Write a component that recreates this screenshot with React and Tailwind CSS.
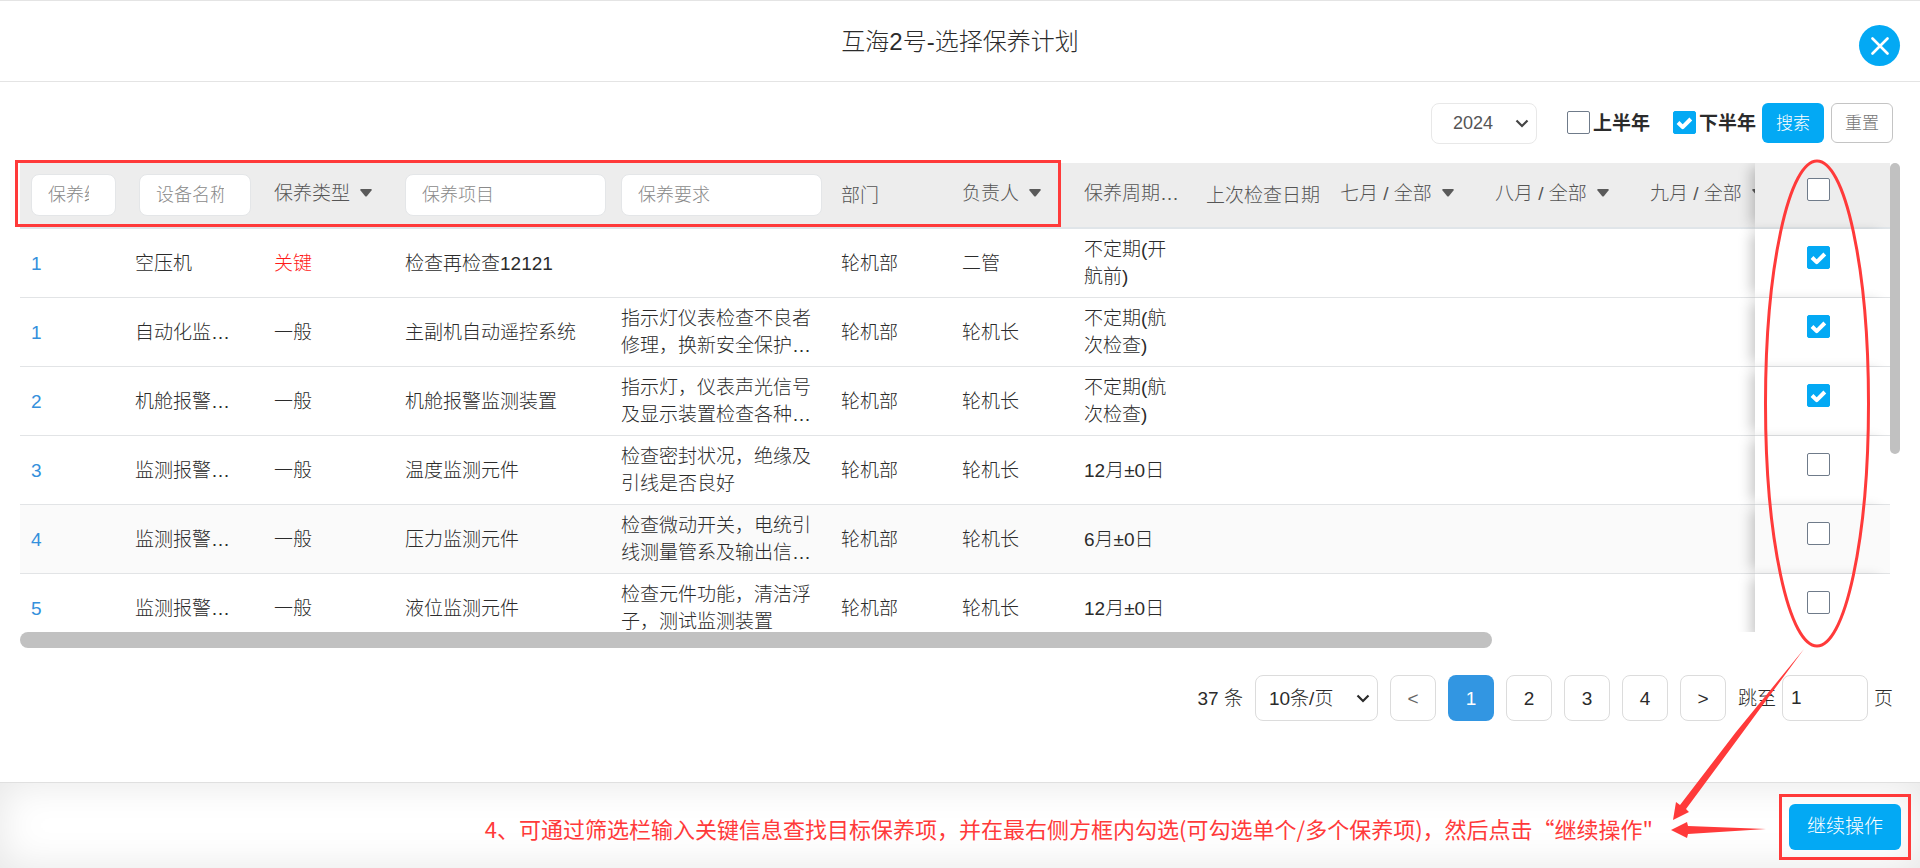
import React, { useState } from "react";
import clsx from "clsx";

const plans = [
  { id: 1, no: "1", device: "空压机", key: true, item: "检查再检查12121", detail: "", dept: "轮机部", owner: "二管", cycle: "不定期(开航前)" },
  { id: 2, no: "1", device: "自动化监…", item: "主副机自动遥控系统", detail: "指示灯仪表检查不良者修理，换新安全保护…", dept: "轮机部", owner: "轮机长", cycle: "不定期(航次检查)" },
  { id: 3, no: "2", device: "机舱报警…", item: "机舱报警监测装置", detail: "指示灯，仪表声光信号及显示装置检查各种…", dept: "轮机部", owner: "轮机长", cycle: "不定期(航次检查)" },
  { id: 4, no: "3", device: "监测报警…", item: "温度监测元件", detail: "检查密封状况，绝缘及引线是否良好", dept: "轮机部", owner: "轮机长", cycle: "12月±0日" },
  { id: 5, no: "4", device: "监测报警…", item: "压力监测元件", detail: "检查微动开关，电统引线测量管系及输出信…", dept: "轮机部", owner: "轮机长", cycle: "6月±0日" },
  { id: 6, no: "5", device: "监测报警…", item: "液位监测元件", detail: "检查元件功能，清洁浮子，测试监测装置", dept: "轮机部", owner: "轮机长", cycle: "12月±0日" },
];

const months = ["七月", "八月", "九月"];
const pages = [1, 2, 3, 4];

const Checkbox = ({ className, ...props }) => (
  <span className={clsx("relative inline-block size-[23px] shrink-0 align-middle", className)}>
    <input
      type="checkbox"
      className="peer block size-full appearance-none rounded-xs border border-[#6f7b8a] bg-white checked:border-[#03a9f4] checked:bg-[#03a9f4]"
      {...props}
    />
    <svg viewBox="0 0 23 23" className="pointer-events-none absolute inset-0 hidden peer-checked:block" fill="none" stroke="#fff" strokeWidth="4" strokeLinejoin="round">
      <path d="M5 11.500l4.700 4.600L17.800 8" />
    </svg>
  </span>
);

const Chevron = ({ className }) => (
  <svg viewBox="0 0 14 9" className={clsx("pointer-events-none absolute h-[9px] w-3.5", className)} fill="none" stroke="currentColor" strokeWidth="2.2">
    <path d="M1.500 1.500L7 7l5.500-5.500" />
  </svg>
);

const FilterButton = ({ children }) => (
  <button type="button" className="flex items-center gap-2.5 pb-1 whitespace-nowrap">
    {children}
    <svg viewBox="0 0 12 8" className="h-2 w-3" fill="#5a5a5a">
      <path d="M1 0h10q1.200 .4 .5 1.500L7 7q-1 1-2 0L.5 1.500Q-.2 .4 1 0z" />
    </svg>
  </button>
);

const FilterInput = ({ label, className }) => (
  <input
    type="text"
    aria-label={label}
    placeholder={label}
    className={clsx("block h-[42px] rounded-lg border border-[#e4e6e8] bg-white pr-[26px] pl-4 text-[18px] placeholder:text-[#8a8a8a]", className)}
  />
);

const stickyCell = "sticky right-0 text-center shadow-[-8px_0_12px_-4px_rgba(0,0,0,0.22)]";
const pageButton = "size-[46px] rounded-lg border border-[#dcdcdc] bg-white";

const App = () => {
  const [selected, setSelected] = useState([1, 2, 3]);
  const [page, setPage] = useState(1);

  const toggle = (id) =>
    setSelected((prev) => (prev.includes(id) ? prev.filter((x) => x !== id) : [...prev, id]));

  return (
    <div className="relative flex min-h-screen flex-col overflow-hidden bg-white font-['Liberation_Sans','Noto_Sans_CJK_SC',sans-serif] text-[19px] leading-[27px] font-light text-[#2b2b2b]">
      <header className="relative flex h-[82px] items-center justify-center border-y border-[#e4e4e4]">
        <h1 className="text-[24px]">互海2号-选择保养计划</h1>
        <button
          type="button"
          aria-label="关闭"
          className="absolute top-6 right-5 flex size-[41px] items-center justify-center rounded-full bg-[#03a9f4]"
        >
          <svg viewBox="0 0 18 18" className="size-[18px]" fill="none" stroke="#fff" strokeWidth="2.6" strokeLinecap="round">
            <path d="M1.500 1.500l15 15M16.500 1.500l-15 15" />
          </svg>
        </button>
      </header>

      <main className="flex-1 px-5 pt-5">
        {/* Search bar */}
        <form className="flex h-[42px] items-center justify-end pr-[7px]">
          <div className="relative mr-[30px]">
            <select
              aria-label="年份"
              className="h-[41px] w-[106px] appearance-none rounded-lg border border-[#e8e8e8] bg-white pl-[21px] text-[18px] text-[#555]"
            >
              <option>2024</option>
            </select>
            <Chevron className="top-4 right-2 text-[#444]" />
          </div>
          <label className="mr-[23px] flex items-center gap-[3px] font-bold">
            <Checkbox className="mb-0.5" />
            上半年
          </label>
          <label className="mr-[6px] flex items-center gap-[3px] font-bold">
            <Checkbox className="mb-0.5" defaultChecked />
            下半年
          </label>
          <button type="button" className="mr-[7px] h-10 w-[62px] rounded-md bg-[#03a9f4] text-[17px] text-white">
            搜索
          </button>
          <button type="button" className="h-10 w-[62px] rounded-md border border-[#c4c4c4] bg-white text-[17px] text-[#777]">
            重置
          </button>
        </form>

        {/* Plan table */}
        <div className="relative mt-[19px]">
          <div className="flex">
            <div className="h-[469px] min-w-0 flex-1 overflow-hidden">
              <table className="w-full min-w-[1910px] table-fixed border-separate border-spacing-0 text-left">
                <colgroup>
                  <col className="w-[104px]" />
                  <col className="w-[139px]" />
                  <col className="w-[131px]" />
                  <col className="w-[216px]" />
                  <col className="w-[220px]" />
                  <col className="w-[121px]" />
                  <col className="w-[122px]" />
                  <col className="w-[122px]" />
                  <col className="w-[135px]" />
                  <col className="w-[155px]" />
                  <col className="w-[155px]" />
                  <col className="w-[155px]" />
                  <col className="w-[135px]" />
                </colgroup>
                <thead className="text-[#555]">
                  <tr className="h-[66px] *:border-b-2 *:border-[#e0e5e9] *:bg-[#ededed] *:font-light">
                    <th className="pl-[11px]"><FilterInput label="保养编号" className="w-[85px]" /></th>
                    <th className="pl-[15px]"><FilterInput label="设备名称" className="w-[112px]" /></th>
                    <th className="pl-[11px]"><FilterButton>保养类型</FilterButton></th>
                    <th className="pl-[11px]"><FilterInput label="保养项目" className="w-[201px]" /></th>
                    <th className="pl-[11px]"><FilterInput label="保养要求" className="w-[201px]" /></th>
                    <th className="pl-[11px]">部门</th>
                    <th className="pl-[11px]"><FilterButton>负责人</FilterButton></th>
                    <th className="px-[11px] pb-1 whitespace-nowrap">保养周期…</th>
                    <th className="pl-[11px] whitespace-nowrap">上次检查日期</th>
                    {months.map((month) => (
                      <th key={month} className="pl-[10px]"><FilterButton>{month} / 全部</FilterButton></th>
                    ))}
                    <th className={clsx(stickyCell, "pr-2")}>
                      <Checkbox aria-label="全选" className="mb-3" />
                    </th>
                  </tr>
                </thead>
                <tbody>
                  {plans.map((plan) => {
                    const bg = plan.id === 5 ? "bg-[#fafafa]" : "bg-white";
                    return (
                      <tr key={plan.id} className={clsx("h-[69px] *:border-b *:border-[#e2e4e6]", bg)}>
                        <td className="px-[11px]"><a href="#plan" className="text-[#3490dc]">{plan.no}</a></td>
                        <td className="px-[11px] whitespace-nowrap">{plan.device}</td>
                        <td className={clsx("px-[11px]", plan.key && "text-[#ff1a1a]")}>{plan.key ? "关键" : "一般"}</td>
                        <td className="px-[11px] whitespace-nowrap">{plan.item}</td>
                        <td className="px-[11px]">{plan.detail}</td>
                        <td className="px-[11px]">{plan.dept}</td>
                        <td className="px-[11px]">{plan.owner}</td>
                        <td className="px-[11px]">{plan.cycle}</td>
                        <td />
                        <td />
                        <td />
                        <td />
                        <td className={clsx(stickyCell, "pr-2", bg)}>
                          <Checkbox
                            aria-label={plan.item}
                            className="mb-3"
                            checked={selected.includes(plan.id)}
                            onChange={() => toggle(plan.id)}
                          />
                        </td>
                      </tr>
                    );
                  })}
                </tbody>
              </table>
            </div>
            <div className="h-[291px] w-2.5 rounded-full bg-[#c1c1c1]" />
          </div>
          <div className="h-4 w-[78.3%] rounded-full bg-[#c1c1c1]" />
          <div className="pointer-events-none absolute -top-[3px] -left-[5px] h-[67px] w-[1046px] border-3 border-[#ff3a3a]" />
        </div>

        {/* Pagination */}
        <nav className="mt-[27px] flex items-center justify-end gap-3 pr-[7px]">
          <span>37 条</span>
          <div className="relative">
            <select
              aria-label="每页条数"
              className="h-[46px] w-[123px] appearance-none rounded-lg border border-[#dcdcdc] bg-white pl-[13px]"
            >
              <option>10条/页</option>
            </select>
            <Chevron className="top-[19px] right-2" />
          </div>
          <button type="button" className={clsx(pageButton, "text-[#666]")}>&lt;</button>
          {pages.map((n) => (
            <button
              key={n}
              type="button"
              onClick={() => setPage(n)}
              className={n === page ? "size-[46px] rounded-lg bg-[#3296e2] text-white" : pageButton}
            >
              {n}
            </button>
          ))}
          <button type="button" className={pageButton}>&gt;</button>
          <label className="flex items-center gap-1.5">
            跳至
            <input type="text" defaultValue="1" className="h-[46px] w-[86px] rounded-lg border border-[#dcdcdc] px-2" />
            页
          </label>
        </nav>
      </main>

      <footer className="flex h-[86px] items-center justify-end gap-[126px] border-t border-[#e0e0e0] pt-0.5 pr-[9px] shadow-[inset_0_0_40px_rgba(0,0,0,0.1)]">
        <p className="pt-1 font-['Noto_Sans_CJK_SC',sans-serif] text-[22px] font-normal whitespace-nowrap text-[#ff3a3a]">
          4、可通过筛选栏输入关键信息查找目标保养项，并在最右侧方框内勾选(可勾选单个/多个保养项)，然后点击“继续操作"
        </p>
        <div className="border-3 border-[#ff3a3a] p-[7px]">
          <button type="button" className="block h-[46px] w-[112px] rounded-md bg-[#03a9f4] text-white">
            继续操作
          </button>
        </div>
      </footer>

      {/* Guide marks */}
      <svg viewBox="0 0 260 700" className="pointer-events-none absolute top-[150px] right-0 h-[700px] w-[260px]" fill="#ff3a3a">
        <ellipse cx="157" cy="253.500" rx="51.500" ry="242.500" fill="none" stroke="#ff3a3a" strokeWidth="3" />
        <path d="M144 499L76 582 20 655l-4-3-3 18 16-8-3-3L80 586z" />
        <path d="M106 679l-78-3-1-4-16 8 16 8 1-4z" />
      </svg>
    </div>
  );
};

export default App;
